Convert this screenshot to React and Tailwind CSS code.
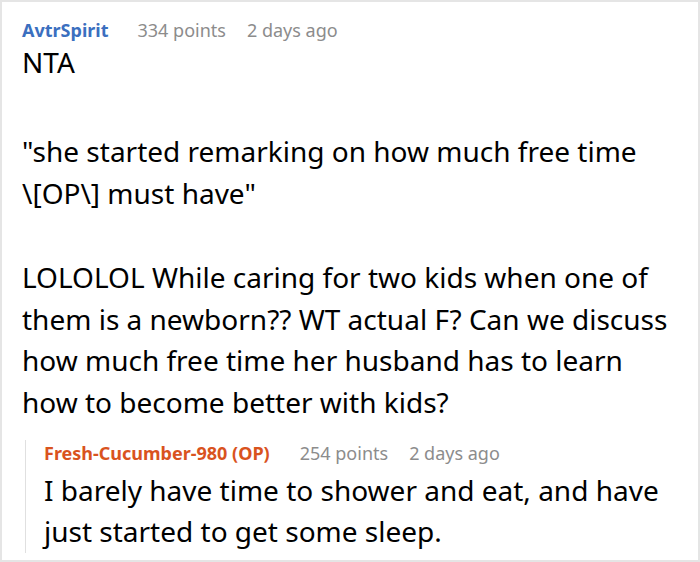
export default function App() {
  const font = { fontFamily: '"Noto Sans", "Open Sans", sans-serif' };
  return (
    <div className="w-[700px] h-[562px] bg-white border-2 border-[#e5e5e5] overflow-hidden" style={font}>
      <div className="pl-[20px] pr-[4px] pt-[15px]">
        <div className="flex items-baseline text-[18px] leading-[26px] whitespace-nowrap">
          <span className="font-bold text-[#3b6fbf]">AvtrSpirit</span>
          <span className="ml-[29px] text-[#8c8c8c]">334 points</span>
          <span className="ml-[21px] text-[#8c8c8c]">2 days ago</span>
        </div>
        <div className="text-[28px] leading-[41.67px] text-black -mt-[1px] whitespace-nowrap">
          <p>NTA</p>
          <p className="mt-[47.5px]">"she started remarking on how much free time<br />\[OP\] must have"</p>
          <p className="mt-[42.5px]">LOLOLOL While caring for two kids when one of<br />them is a newborn?? WT actual F? Can we discuss<br />how much free time her husband has to learn<br />how to become better with kids?</p>
        </div>
        <div className="mt-[16px] border-l border-[#e0e0e0] pl-[18px] ml-[3px]">
          <div className="flex items-baseline text-[18px] leading-[26px] whitespace-nowrap">
            <span className="font-bold text-[#d9531e]">Fresh-Cucumber-980 (OP)</span>
            <span className="ml-[30px] text-[#8c8c8c]">254 points</span>
            <span className="ml-[21px] text-[#8c8c8c]">2 days ago</span>
          </div>
          <div className="text-[28px] leading-[41.67px] text-black mt-[4px] whitespace-nowrap">
            <p>I barely have time to shower and eat, and have<br />just started to get some sleep.</p>
          </div>
        </div>
      </div>
    </div>
  );
}
